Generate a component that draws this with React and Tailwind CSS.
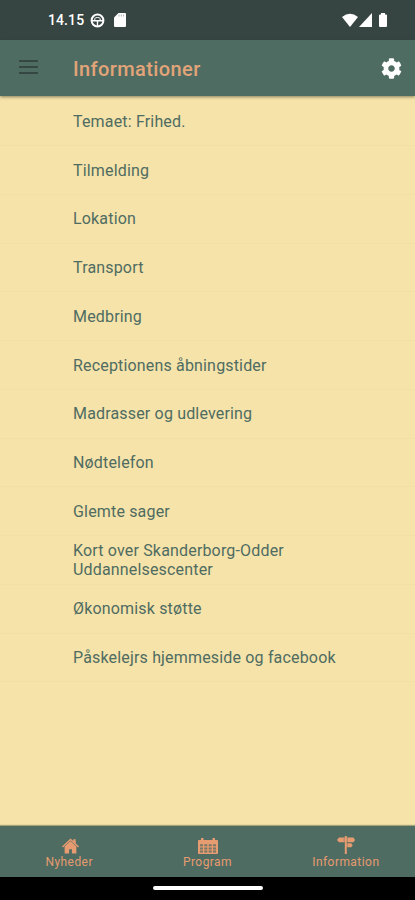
import { FaCog } from "react-icons/fa";

const items = [
  "Temaet: Frihed.",
  "Tilmelding",
  "Lokation",
  "Transport",
  "Medbring",
  "Receptionens åbningstider",
  "Madrasser og udlevering",
  "Nødtelefon",
  "Glemte sager",
  "Kort over Skanderborg-Odder Uddannelsescenter",
  "Økonomisk støtte",
  "Påskelejrs hjemmeside og facebook",
];

const App = () => {
  return (
    <div className="flex h-[900px] w-[415px] flex-col overflow-hidden bg-[#f6e3a9] font-['Roboto',sans-serif]">
      <StatusBar />

      <header className="z-10 flex h-14 shrink-0 items-center bg-[#4f6c62] pl-[19px] pr-[13px] shadow-[0_1px_3px_rgba(60,60,40,0.6)]">
        <button className="-mt-0.5 flex w-[19px] flex-col gap-[4px]">
          <span className="h-[2px] bg-[#354742]" />
          <span className="h-[2px] bg-[#354742]" />
          <span className="h-[2px] bg-[#354742]" />
        </button>
        <h1 className="ml-[35px] flex-1 pt-0.5 text-[20px] font-medium tracking-[0.4px] text-[#e2a478]">Informationer</h1>
        <FaCog className="h-[21px] w-[21px] text-white" />
      </header>

      {/* Menu list */}
      <ul className="flex-1 pt-[1.4px]">
        {items.map((item) => (
          <li key={item} className="flex h-[48.75px] items-center border-b border-[#f2dfa6] pl-[73px] pr-[70px]">
            <span className="text-[16px] leading-[19px] tracking-[0.17px] text-[#4f6c62]">{item}</span>
          </li>
        ))}
      </ul>

      <nav className="grid h-[51px] shrink-0 grid-cols-3 bg-[#4f6c62] shadow-[0_-1px_1px_rgba(90,100,70,0.5)]">
        <Tab icon={<HomeIcon />} label="Nyheder" />
        <Tab icon={<CalendarIcon />} label="Program" />
        <Tab icon={<SignIcon />} label="Information" />
      </nav>

      <div className="flex h-[23px] shrink-0 justify-center bg-black pt-[9px]">
        <div className="h-1 w-[110px] rounded-full bg-white" />
      </div>
    </div>
  );
};

const Tab = ({ icon, label }) => (
  <div className="flex flex-col items-center pt-[10px] text-[#e69b70]">
    <div className="flex h-[19px] items-start">{icon}</div>
    <span className="text-[12px] leading-[14px] tracking-[0.45px]">{label}</span>
  </div>
);

const StatusBar = () => (
  <div className="flex h-10 shrink-0 items-center bg-[#364542] pl-12 pr-[27px] text-white">
    <span className="w-[36px] text-[14px] font-medium tracking-[0.1px]">14.15</span>
    <svg className="ml-[6px] h-[15px] w-[15px]" viewBox="0 0 15 15" fill="none" stroke="currentColor">
      <circle cx="7.5" cy="7.5" r="5.9" strokeWidth="2" />
      <path d="M2 7.8h11M7.5 8v5" strokeWidth="1.4" />
      <path d="M4.8 7.5V5.8q0-1.3 2.7-1.3t2.7 1.3v1.7" strokeWidth="1" />
    </svg>
    <svg className="ml-[9px] h-[14px] w-3" viewBox="0 0 12 14" fill="currentColor">
      <path d="M4.5 0H11q1 0 1 1v12q0 1-1 1H1q-1 0-1-1V4.5z" />
      <path d="M5 1.5v2M7.3 1.5v2M9.6 1.5v2" stroke="#364542" strokeWidth=".4" />
    </svg>
    <div className="ml-auto flex items-center">
      <svg className="h-[14px] w-4" viewBox="0 0 16 14" fill="currentColor">
        <path d="M0 4Q8-2.5 16 4L8 14z" />
      </svg>
      <svg className="ml-px h-[14px] w-[13px]" viewBox="0 0 13 14" fill="currentColor">
        <path d="M13 0v14H0z" />
      </svg>
      <svg className="ml-[7px] mr-px h-[14px] w-2" viewBox="0 0 8 14" fill="currentColor">
        <path d="M2 0h4v1.5h1q1 0 1 1V13q0 1-1 1H1q-1 0-1-1V2.5q0-1 1-1h1z" />
      </svg>
    </div>
  </div>
);

const HomeIcon = () => (
  <svg className="ml-0.5 mt-[2px] h-[16px] w-[17px]" viewBox="0 0 18 16" fill="currentColor">
    <path d="M9 0l3 2.8V.8h2.5v4.3L18 8.4l-1 1.1L9 2.2 1 9.5 0 8.4z" />
    <path d="M9 2.6l6.2 5.8V16h-4.7v-4.5h-3V16H2.8V8.4z" />
  </svg>
);

const CalendarIcon = () => (
  <svg className="ml-0.5 mt-[2px] h-[16px] w-5" viewBox="0 0 20 16" fill="currentColor">
    <path d="M3 0h2.5v2h9V0H17v2h2q1 0 1 1v12q0 1-1 1H1q-1 0-1-1V3q0-1 1-1h2z" />
    <path
      d="M2 6.2h3v2H2zM6.3 6.2h3v2h-3zM10.7 6.2h3v2h-3zM15 6.2h3v2h-3zM2 9.4h3v2H2zM6.3 9.4h3v2h-3zM10.7 9.4h3v2h-3zM15 9.4h3v2h-3zM2 12.6h3v2H2zM6.3 12.6h3v2h-3zM10.7 12.6h3v2h-3zM15 12.6h3v2h-3z"
      fill="#4f6c62"
      fillOpacity=".75"
    />
  </svg>
);

const SignIcon = () => (
  <svg className="ml-px h-[18px] w-[18px]" viewBox="0 0 18 18" fill="currentColor">
    <path d="M7.8 0h2v1.5h6.7L18 4l-1.5 2.3H9.8v.9h4.4l1.5 2-1.5 2H9.8V18h-2V6.3H2L0 4l2-2.5h5.8z" />
    <path d="M7.2 1.5v5M10.3 1.5v10" stroke="#4f6c62" strokeWidth=".4" />
  </svg>
);

export default App;
